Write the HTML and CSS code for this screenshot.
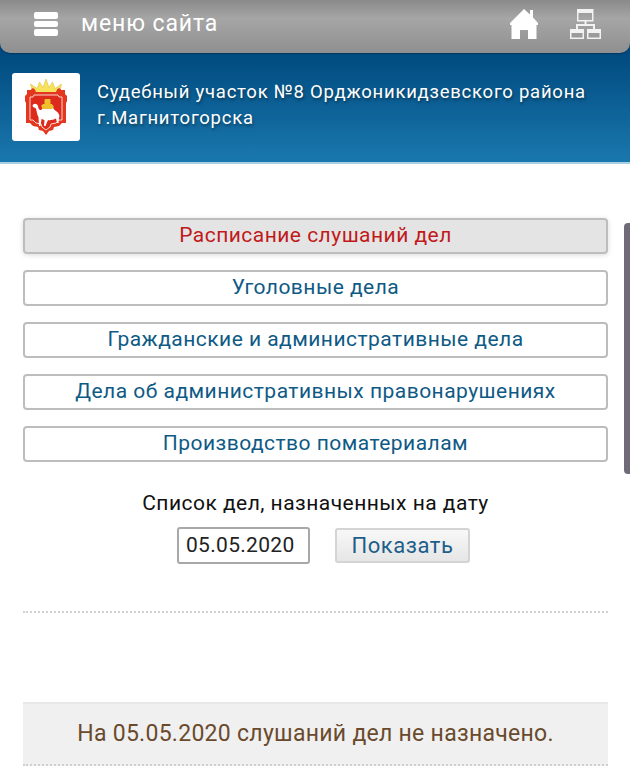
FILE: index.html
```html
<!DOCTYPE html>
<html lang="ru">
<head>
<meta charset="utf-8">
<title>Судебный участок №8</title>
<link rel="stylesheet" href="styles.css">
</head>
<body>
<header class="head">
  <div class="menubar">
    <div class="burger"><span></span><span></span><span></span></div>
    <div class="menu-label">меню сайта</div>
    <svg class="ico-home" viewBox="0 0 28 30" width="28" height="30"><path fill="#fff" d="M14 0 L20 5.500 V1 H23 V8.500 L28 14 V16 H26.500 V30 H18 V21 H10 V30 H1.500 V16 H0 V14 Z"/></svg>
    <svg class="ico-map" viewBox="0 0 31 30" width="31" height="30"><g fill="none" stroke="#f2f2f2" stroke-width="1.500"><rect x="7.750" y=".75" width="15" height="11"/><rect x=".75" y="20.750" width="12.500" height="8.500"/><rect x="17.750" y="20.750" width="12.500" height="8.500"/></g><path fill="#f2f2f2" d="M7 0h16v4H7zM0 20h14v4H0zM17 20h14v4H17zM14.500 12h2v4h-2zM6 15h19v2H6zM6 15h2v5H6zM23 15h2v5h-2z"/></svg>
  </div>
  <div class="court">
    <div class="crest">
      <svg viewBox="0 0 44 56" width="44" height="56">
        <path fill="#f6e35c" stroke="#dcb434" stroke-width=".5" d="M9 15 L6.500 5 L13 9.500 L15.500 3 L19 8.500 L22 0 L25 8.500 L28.500 3 L31 9.500 L37.500 5 L35 15 Z"/>
        <path fill="#e4371f" d="M3 11 H7 C8 8 11 9 12 13 H32 C33 9 36 8 37 11 H41 V15 L43 17 V22 L42 24 V44 H38 L35 47 L30 48 L29 51 L25 52 L22 56 L19 52 L15 51 L14 48 L9 47 L6 44 H2 V24 L1 22 V17 L3 15 Z"/>
        <path fill="#dc2a1c" stroke="#fbd5c8" stroke-width="1" d="M6 18 H9 L10 16 H34 L35 18 H38 V41 H35 L32 44 L27 45 L26 48 L22 51 L18 48 L17 45 L12 44 L9 41 H6 Z"/>
        <path fill="#fff" d="M8.500 27 C9 24 13 24 14 27 C14.500 31 16.500 32.500 18.500 29.500 C19.500 27 22.500 27 24 29.500 C25.500 27 28.500 27 30.500 31 C34 33 36.500 36 35 39 L34.500 44 H33 L32 39.500 C29 41 26 41.500 24 41 L21.500 47 H20 L20.500 41 L17.500 40 L16.500 47 H15 L14.500 38 C12.500 35 13 31 11.500 29 C10.500 28.500 9.500 28.500 8.500 27 Z"/>
        <rect x="20.500" y="20" width="6" height="6" rx="1" fill="#efc02e"/>
        <path fill="#efc02e" d="M17 27 L19 25 H28 L30 28 L28 30 H19 Z"/>
      </svg>
    </div>
    <div class="court-name">Судебный участок №8 Орджоникидзевского района г.Магнитогорска</div>
  </div>
</header>
<main class="content">
  <nav class="tabs">
    <a class="tab active">Расписание слушаний дел</a>
    <a class="tab">Уголовные дела</a>
    <a class="tab">Гражданские и административные дела</a>
    <a class="tab">Дела об административных правонарушениях</a>
    <a class="tab">Производство поматериалам</a>
  </nav>
  <form class="date-form">
    <div class="date-label">Список дел, назначенных на дату</div>
    <div class="date-row">
      <div class="date-input">05.05.2020</div>
      <div class="date-btn">Показать</div>
    </div>
  </form>
  <div class="dots"></div>
  <div class="notice">На 05.05.2020 слушаний дел не назначено.</div>
</main>
<div class="scrollbar"></div>
</body>
</html>
```
FILE: styles.css
```css
* { box-sizing: border-box; }
html, body { margin: 0; height: 768px; overflow: hidden; background: #fff; }
body { font-family: Roboto, "Liberation Sans", sans-serif; position: relative; }
.head { background: linear-gradient(#004a7f 53px, #1a78ae 162px); border-bottom: 2px solid #a9cfe3; height: 164px; }
.menubar { height: 53px; background: linear-gradient(#8a8a8a, #a6a6a6 35%, #8f8f8f); border-radius: 0 0 10px 10px; display: flex; align-items: center; padding: 0 0 6px 34px; box-shadow: 0 1px 1px rgba(0,0,0,.25); }
.burger { width: 24px; display: flex; flex-direction: column; gap: 2px; margin-top: 1px; }
.burger span { display: block; height: 6.670px; background: #fff; border-radius: 2px; }
.menu-label { margin-left: 23px; color: #fff; font-size: 23px; letter-spacing: .9px; flex: 1; }
.ico-home { margin: 1px 32px 0 0; display: block; }
.ico-map { margin: 1px 29px 0 0; display: block; }
.court { display: flex; align-items: center; padding: 20px 12px 0; }
.crest { width: 68px; height: 68px; background: #fff; border-radius: 3px; display: flex; align-items: center; justify-content: center; flex: none; }
.court-name { margin-left: 17px; color: #fff; font-size: 18.500px; line-height: 26px; letter-spacing: .76px; text-shadow: 1px 2px 3px rgba(0,0,0,.4); width: 510px; margin-top: -4px; }
.content { padding: 54px 22px 0 23px; }
.tabs { display: flex; flex-direction: column; gap: 16px; }
.tab { display: block; height: 36px; border: 2px solid #bdbdbd; border-radius: 4px; background: #fff; color: #0e5a85; font-size: 21px; line-height: 31px; text-align: center; letter-spacing: .47px; }
.tab.active { background: #e4e4e4; color: #c01a1a; box-shadow: 0 1px 5px rgba(0,0,0,.15); }
.date-form { margin-top: 27px; }
.date-label { text-align: center; font-size: 21px; line-height: 28px; color: #111; letter-spacing: .47px; }
.date-row { display: flex; justify-content: center; margin-top: 10px; gap: 25px; align-items: center; padding-left: 16px; }
.date-input { width: 133px; height: 37px; border: 2px solid #a8a8a8; border-radius: 3px; font-size: 21px; line-height: 33px; color: #222; padding-left: 7px; letter-spacing: .3px; background: #fff; }
.date-btn { width: 135px; height: 35px; border: 2px solid #d4d4d4; border-radius: 3px; background: linear-gradient(#f8f8f8, #e6e6e6); color: #1c5f8a; font-size: 22px; line-height: 31px; text-align: center; letter-spacing: .55px; }
.dots { margin-top: 47px; border-top: 2px dotted #d0d0d0; }
.notice { margin-top: 89px; height: 64px; background: #f0f0f0; border-top: 2px solid #e8e8e8; border-bottom: 2px dotted #d0d0d0; color: #6a4a2c; font-size: 23px; line-height: 60px; text-align: center; letter-spacing: .28px; }
.scrollbar { position: absolute; right: 0; top: 223px; width: 6px; height: 251px; background: #6f6c78; border-radius: 4px 0 0 4px; }
```
